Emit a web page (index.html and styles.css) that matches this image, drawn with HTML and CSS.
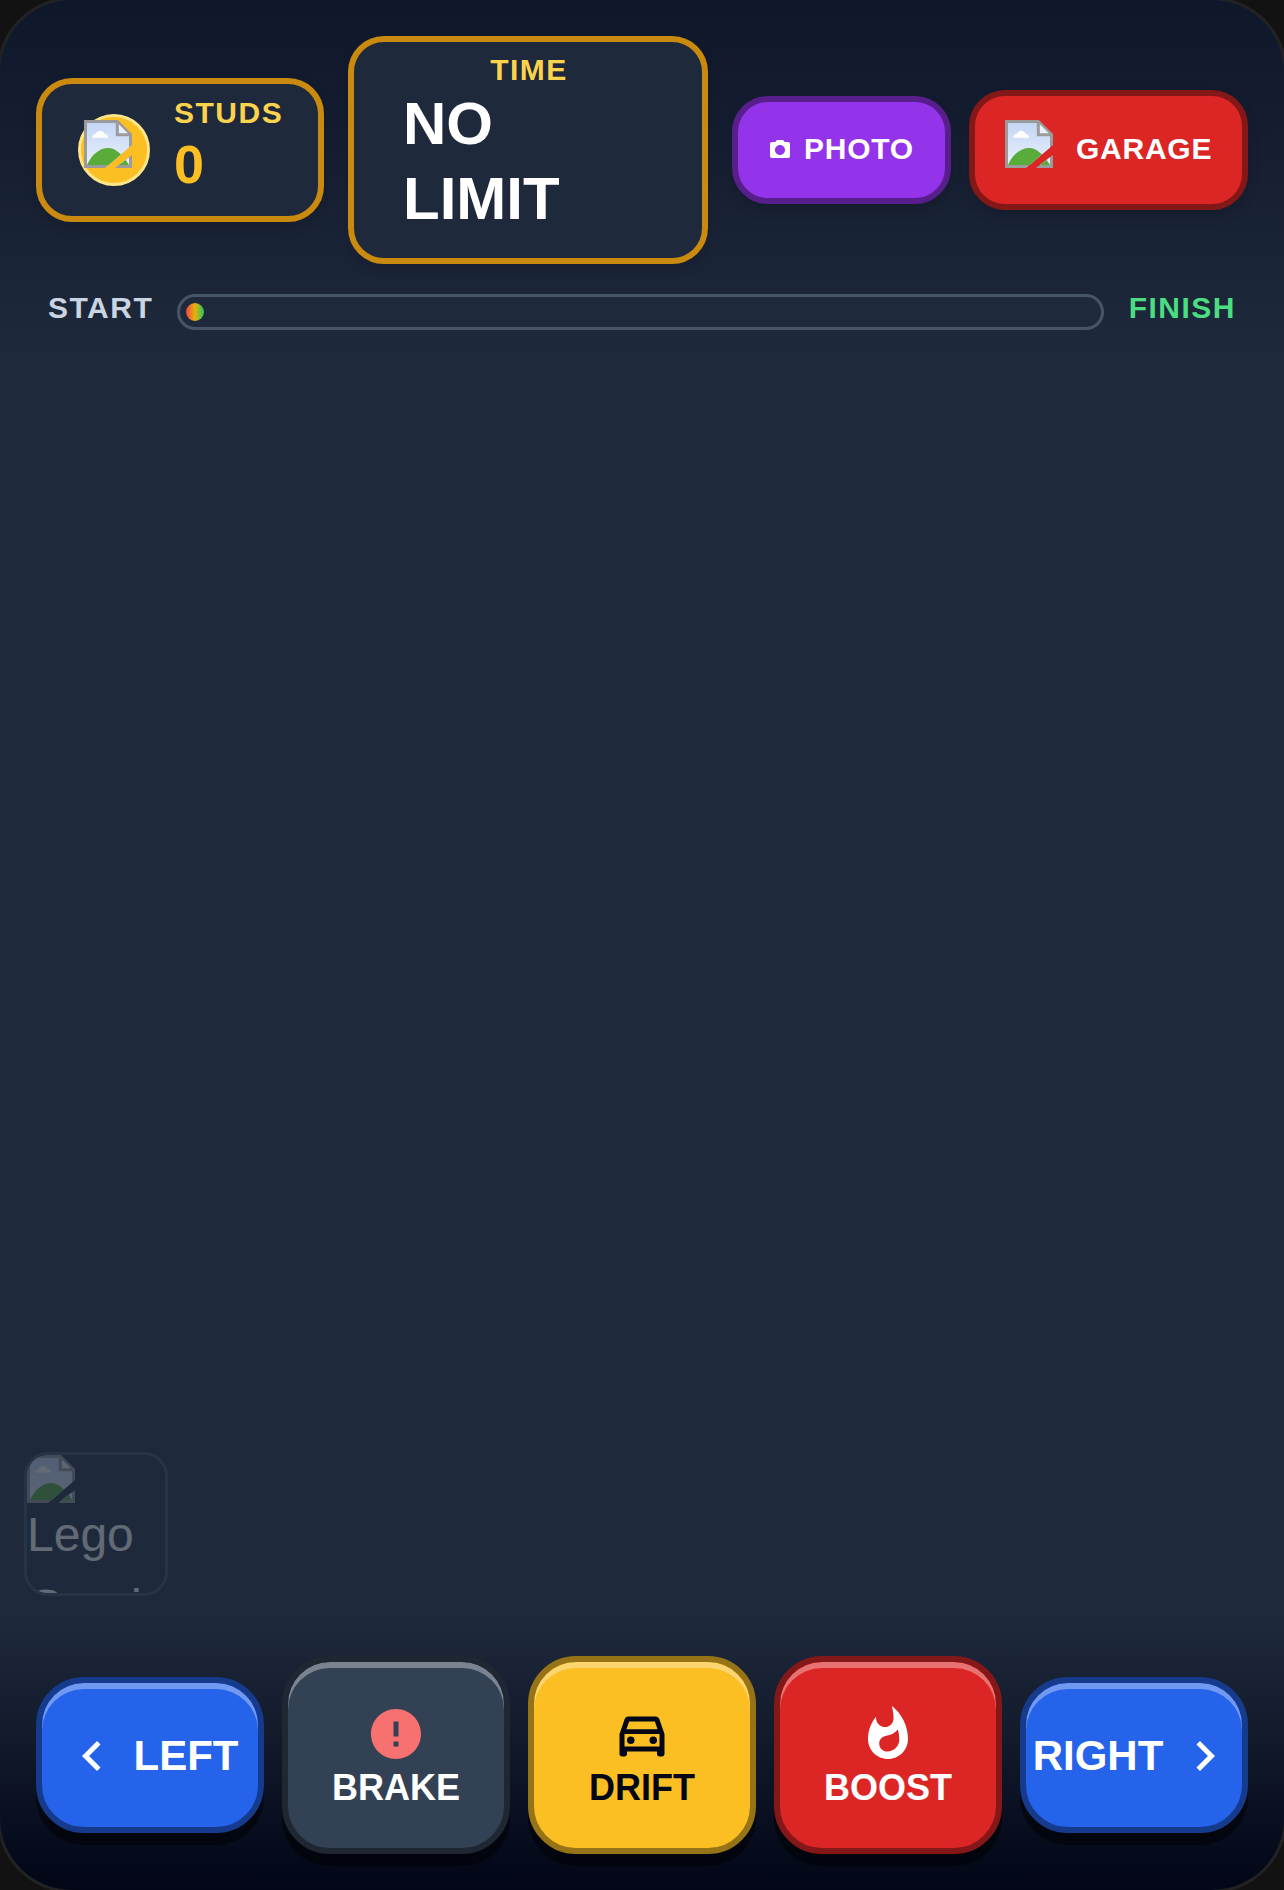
FILE: index.html
```html
<!DOCTYPE html>
<html>

<head>
    <title>Lego Racer</title>
    <link rel="stylesheet" href="styles.css">
</head>

<body>
    <svg class="defs" width="0" height="0">
        <defs>
            <linearGradient id="sky" x1="0" y1="0" x2="0" y2="1">
                <stop offset="0" stop-color="#c4d6f5" />
                <stop offset="1" stop-color="#e8f0fc" />
            </linearGradient>
            <clipPath id="slash">
                <path d="M0 0H16V8.3L7 16H0Z" />
                <path d="M10.3 16L16 11.7V16Z" />
            </clipPath>
            <symbol id="broken-img" viewBox="0 0 16 16">
                <g clip-path="url(#slash)">
                    <path d="M0 0H11.3L16 4.7V16H0Z" fill="#9b9b9b" />
                    <path d="M1 1H10.6V5.4H15V15H1Z" fill="url(#sky)" />
                    <path d="M11.6 1.4L14.6 4.4H11.6Z" fill="#e9eef7" />
                    <path d="M2.8 5.9C2.8 5 3.4 4.6 4 4.6 4.3 3.3 6.4 3.2 6.8 4.6 7.6 4.6 8 5.2 8 5.9Z" fill="#fff" />
                    <path d="M1 15C2.6 11.3 5.4 9.3 8 9.3 10.8 9.3 13 11.8 15 15Z" fill="#59ab3a" />
                </g>
            </symbol>
        </defs>
    </svg>

    <div class="screen">
        <header class="top">
            <div class="hud">
                <div class="stats">
                    <div class="stat studs">
                        <div class="coin">
                            <svg class="broken"><use href="#broken-img" /></svg>
                        </div>
                        <div class="studs-text">
                            <div class="label">STUDS</div>
                            <div class="studs-value">0</div>
                        </div>
                    </div>
                    <div class="stat time">
                        <div class="label time-label">TIME</div>
                        <div class="time-value">NO LIMIT</div>
                    </div>
                </div>
                <div class="actions">
                    <button class="action photo">
                        <svg class="cam" viewBox="0 0 24 24">
                            <path fill-rule="evenodd" d="M9 2L7.17 4H4c-1.1 0-2 .9-2 2v12c0 1.1.9 2 2 2h16c1.1 0 2-.9 2-2V6c0-1.1-.9-2-2-2h-3.17L15 2H9zm3 15c-2.76 0-5-2.24-5-5s2.24-5 5-5 5 2.24 5 5-2.24 5-5 5z" />
                        </svg>
                        <span>PHOTO</span>
                    </button>
                    <button class="action garage">
                        <svg class="broken garage-img"><use href="#broken-img" /></svg>
                        <span>GARAGE</span>
                    </button>
                </div>
            </div>
            <div class="progress">
                <span class="end start">START</span>
                <div class="bar"><div class="dot"></div></div>
                <span class="end finish">FINISH</span>
            </div>
        </header>

        <main class="road">
            <div class="wheel">
                <svg class="broken"><use href="#broken-img" /></svg>
                <div class="wheel-alt">Lego Gaming Wheel</div>
            </div>
        </main>

        <footer class="controls">
            <button class="pad side blue">
                <svg class="ico" viewBox="0 0 24 24"><path d="M15.41 7.41L14 6l-6 6 6 6 1.41-1.41L10.83 12z" /></svg>
                <span>LEFT</span>
            </button>
            <button class="pad tall slate">
                <svg class="ico" viewBox="0 0 24 24">
                    <path class="alert" d="M12 2C6.48 2 2 6.48 2 12s4.48 10 10 10 10-4.48 10-10S17.52 2 12 2zm1 15h-2v-2h2v2zm0-4h-2V7h2v6z" />
                </svg>
                <span>BRAKE</span>
            </button>
            <button class="pad tall yellow">
                <svg class="ico" viewBox="0 0 24 24">
                    <path d="M18.92 6.01C18.72 5.42 18.16 5 17.5 5h-11c-.66 0-1.21.42-1.42 1.01L3 12v8c0 .55.45 1 1 1h1c.55 0 1-.45 1-1v-1h12v1c0 .55.45 1 1 1h1c.55 0 1-.45 1-1v-8l-2.08-5.99zM6.85 7h10.29l1.08 3.11H5.77L6.85 7zM19 17H5v-5h14v5z" />
                    <circle cx="7.5" cy="14.5" r="1.5" />
                    <circle cx="16.5" cy="14.5" r="1.5" />
                </svg>
                <span>DRIFT</span>
            </button>
            <button class="pad tall red">
                <svg class="ico" viewBox="0 0 24 24">
                    <path d="M13.5.67s.74 2.65.74 4.8c0 2.06-1.35 3.73-3.41 3.73-2.07 0-3.63-1.67-3.63-3.73l.03-.36C5.21 7.51 4 10.62 4 14c0 4.42 3.58 8 8 8s8-3.58 8-8C20 8.61 17.41 3.8 13.5.67zM11.71 19c-1.78 0-3.22-1.4-3.22-3.14 0-1.62 1.05-2.76 2.81-3.12 1.77-.36 3.6-1.21 4.62-2.58.39 1.29.59 2.65.59 4.04 0 2.65-2.15 4.8-4.8 4.8z" />
                </svg>
                <span>BOOST</span>
            </button>
            <button class="pad side blue">
                <span>RIGHT</span>
                <svg class="ico" viewBox="0 0 24 24"><path d="M10 6L8.59 7.41 13.17 12l-4.58 4.59L10 18l6-6z" /></svg>
            </button>
        </footer>
    </div>
</body>

</html>
```

FILE: styles.css
```css
* {
    box-sizing: border-box;
}

body {
    margin: 0;
    background-color: #121212;
    font-family: 'Liberation Sans', Arial, sans-serif;
    overflow: hidden;
}

button {
    font-family: inherit;
    margin: 0;
    padding: 0;
}

.defs {
    display: block;
}

.screen {
    height: 1890px;
    display: flex;
    flex-direction: column;
    overflow: hidden;
    background-color: #1e293b;
    border-radius: 72px;
    box-shadow: 0 0 0 3px #222;
}

.top {
    padding: 36px 36px 24px;
    background: linear-gradient(#0f172a, #1e293b);
}

.hud {
    display: flex;
    justify-content: space-between;
    align-items: center;
}

.stats {
    display: flex;
    align-items: center;
    gap: 24px;
}

.stat {
    background-color: #1e293b;
    border: 6px solid #ca8a0f;
    border-radius: 36px;
    box-shadow: 0 6px 12px rgba(0, 0, 0, 0.15);
}

.studs {
    display: flex;
    align-items: center;
    gap: 24px;
    width: 288px;
    height: 144px;
    padding: 0 36px;
}

.coin {
    flex: none;
    width: 72px;
    height: 72px;
    padding: 3px;
    background-color: #fbbf24;
    border: 3px solid #fde68a;
    border-radius: 50%;
}

.broken {
    display: block;
    flex: none;
    width: 48px;
    height: 48px;
}

.studs-text {
    padding-bottom: 8px;
}

.label {
    font-size: 30px;
    font-weight: 700;
    line-height: 36px;
    letter-spacing: 1.5px;
    color: #fcd34d;
}

.studs-value {
    font-size: 54px;
    font-weight: 700;
    line-height: 66px;
    color: #fbbf24;
}

.time {
    width: 360px;
    padding: 12px 47px 22px 49px;
}

.time-label {
    text-align: center;
    line-height: 32px;
}

.time-value {
    font-size: 60px;
    font-weight: 700;
    line-height: 75px;
    color: white;
}

.actions {
    display: flex;
    align-items: center;
    gap: 18px;
}

.action {
    display: flex;
    align-items: center;
    padding: 0 30px;
    font-size: 30px;
    font-weight: 700;
    letter-spacing: 0.75px;
    color: white;
    border-radius: 36px;
    box-shadow: 0 6px 12px rgba(0, 0, 0, 0.15);
}

.action span {
    margin-bottom: 2px;
}

.photo {
    width: 219px;
    height: 108px;
    gap: 12px;
    background-color: #9333ea;
    border: 6px solid #581f8c;
}

.cam {
    flex: none;
    width: 24px;
    height: 24px;
    fill: white;
}

.garage {
    width: 279px;
    height: 120px;
    gap: 23px;
    background-color: #dc2626;
    border: 6px solid #841717;
}

.garage-img {
    margin-top: -12px;
}

.progress {
    display: flex;
    align-items: center;
    gap: 24px;
    padding: 0 12px;
    margin-top: 30px;
}

.end {
    font-size: 30px;
    font-weight: 700;
    letter-spacing: 1.5px;
    line-height: 36px;
    margin-top: -9px;
}

.start {
    color: #cbd5e1;
}

.finish {
    margin-left: 1px;
    color: #4ade80;
}

.bar {
    flex: 1;
    height: 36px;
    padding: 6px;
    background-color: #1e293b;
    border: 3px solid #475569;
    border-radius: 18px;
}

.dot {
    width: 18px;
    height: 18px;
    border-radius: 50%;
    background: linear-gradient(to right, #ef4444, #eab308, #22c55e);
}

.road {
    flex: 1;
    display: flex;
    align-items: flex-end;
    padding: 0 0 24px 24px;
}

.wheel {
    width: 144px;
    height: 144px;
    overflow: hidden;
    border: 3px solid #3f4d61;
    border-radius: 24px;
    opacity: 0.3;
}

.wheel-alt {
    margin-top: -4px;
    font-size: 48px;
    line-height: 72px;
    color: white;
}

.controls {
    display: flex;
    align-items: center;
    gap: 18px;
    height: 270px;
    padding: 36px;
    background: linear-gradient(#1e293b, #020617);
}

.pad {
    flex: 0 0 228px;
    display: flex;
    align-items: center;
    justify-content: center;
    font-weight: 700;
    color: white;
    border-width: 6px;
    border-style: solid;
    border-radius: 48px;
    box-shadow: inset 0 6px 0 rgba(255, 255, 255, 0.35), 0 12px 0 rgba(0, 0, 0, 0.5);
}

.side {
    height: 156px;
    gap: 12px;
    padding-top: 2px;
    font-size: 42px;
}

.tall {
    height: 198px;
    flex-direction: column;
    gap: 1px;
    padding-top: 4px;
    font-size: 36px;
    line-height: 45px;
}

.ico {
    width: 60px;
    height: 60px;
    flex: none;
    fill: currentColor;
}

.blue {
    background-color: #2563eb;
    border-color: #163b8d;
}

.slate {
    background-color: #334155;
    border-color: #1f2733;
}

.alert {
    fill: #f87171;
}

.yellow {
    background-color: #fbbf24;
    border-color: #967316;
    color: #020617;
}

.red {
    background-color: #dc2626;
    border-color: #841717;
}
```
